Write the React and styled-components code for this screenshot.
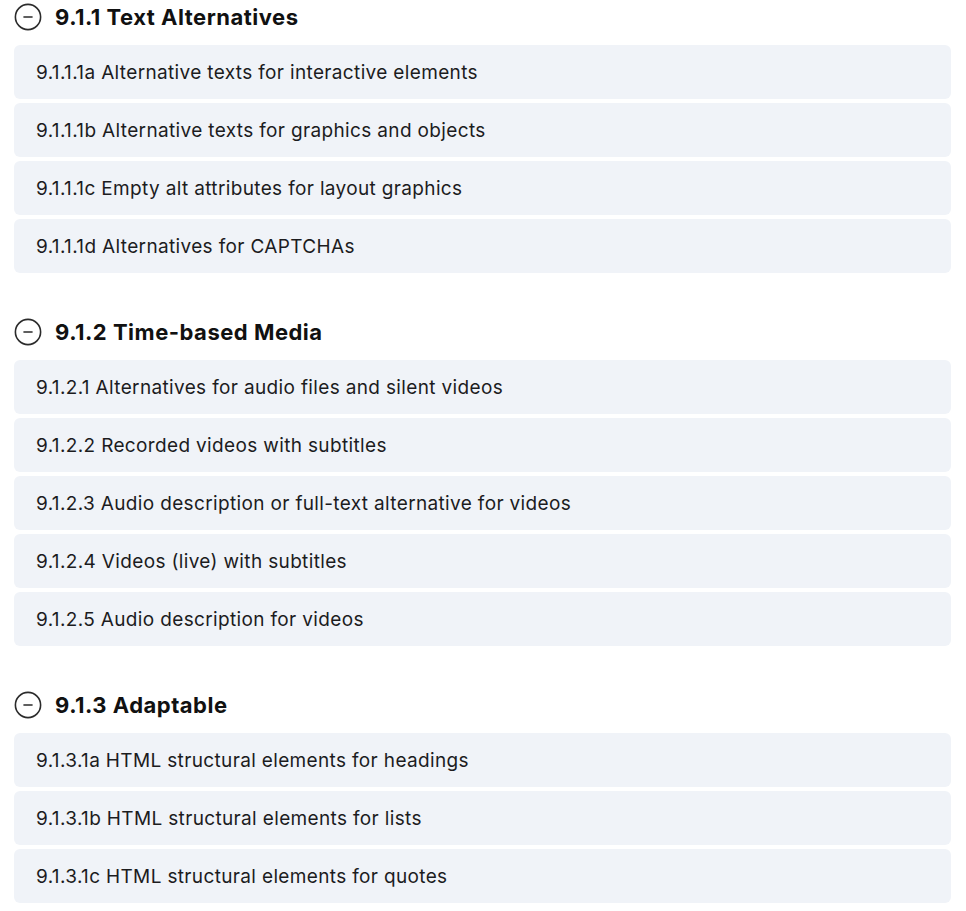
import React from "react";
import styled, { createGlobalStyle } from "styled-components";

const sections = [
    {
        title: "9.1.1 Text Alternatives",
        items: [
            "9.1.1.1a Alternative texts for interactive elements",
            "9.1.1.1b Alternative texts for graphics and objects",
            "9.1.1.1c Empty alt attributes for layout graphics",
            "9.1.1.1d Alternatives for CAPTCHAs",
        ],
    },
    {
        title: "9.1.2 Time-based Media",
        items: [
            "9.1.2.1 Alternatives for audio files and silent videos",
            "9.1.2.2 Recorded videos with subtitles",
            "9.1.2.3 Audio description or full-text alternative for videos",
            "9.1.2.4 Videos (live) with subtitles",
            "9.1.2.5 Audio description for videos",
        ],
    },
    {
        title: "9.1.3 Adaptable",
        items: [
            "9.1.3.1a HTML structural elements for headings",
            "9.1.3.1b HTML structural elements for lists",
            "9.1.3.1c HTML structural elements for quotes",
        ],
    },
];

const CollapseIcon = () => (
    <svg width="28" height="28" viewBox="0 0 28 28" fill="none">
        <circle cx="14" cy="14" r="12.6" stroke="#2b2b2b" strokeWidth="1.6" />
        <line x1="10" y1="14" x2="18" y2="14" stroke="#2b2b2b" strokeWidth="1.6" strokeLinecap="round" />
    </svg>
);

const App = () => {
    return (
        <>
            <GlobalStyle />
            <Page>
                {sections.map((section) => (
                    <Section key={section.title}>
                        <Header>
                            <CollapseIcon />
                            <Title>{section.title}</Title>
                        </Header>
                        <List>
                            {section.items.map((item) => (
                                <Row key={item}>{item}</Row>
                            ))}
                        </List>
                    </Section>
                ))}
            </Page>
        </>
    );
};

const GlobalStyle = createGlobalStyle`
    body {
        margin: 0;
        background: #ffffff;
        font-family: Inter, "Noto Sans", sans-serif;
        color: #1c1c1e;
    }
`;

const Page = styled.div`
    display: flex;
    flex-direction: column;
    gap: 42px;
    padding: 0 15px 0 14px;
`;

const Section = styled.section`
    display: flex;
    flex-direction: column;
`;

const Header = styled.div`
    display: flex;
    align-items: center;
    gap: 13px;
    height: 34px;
    margin-bottom: 11px;
`;

const Title = styled.h2`
    margin: 0;
    font-size: 22px;
    font-weight: 700;
    letter-spacing: 0.5px;
    color: #111;
`;

const List = styled.div`
    display: flex;
    flex-direction: column;
    gap: 4px;
`;

const Row = styled.div`
    display: flex;
    align-items: center;
    height: 54px;
    padding-left: 22px;
    border-radius: 6px;
    background: #f0f3f8;
    font-size: 19px;
    letter-spacing: 0.35px;
    color: #1c1c1e;
`;

export default App;
